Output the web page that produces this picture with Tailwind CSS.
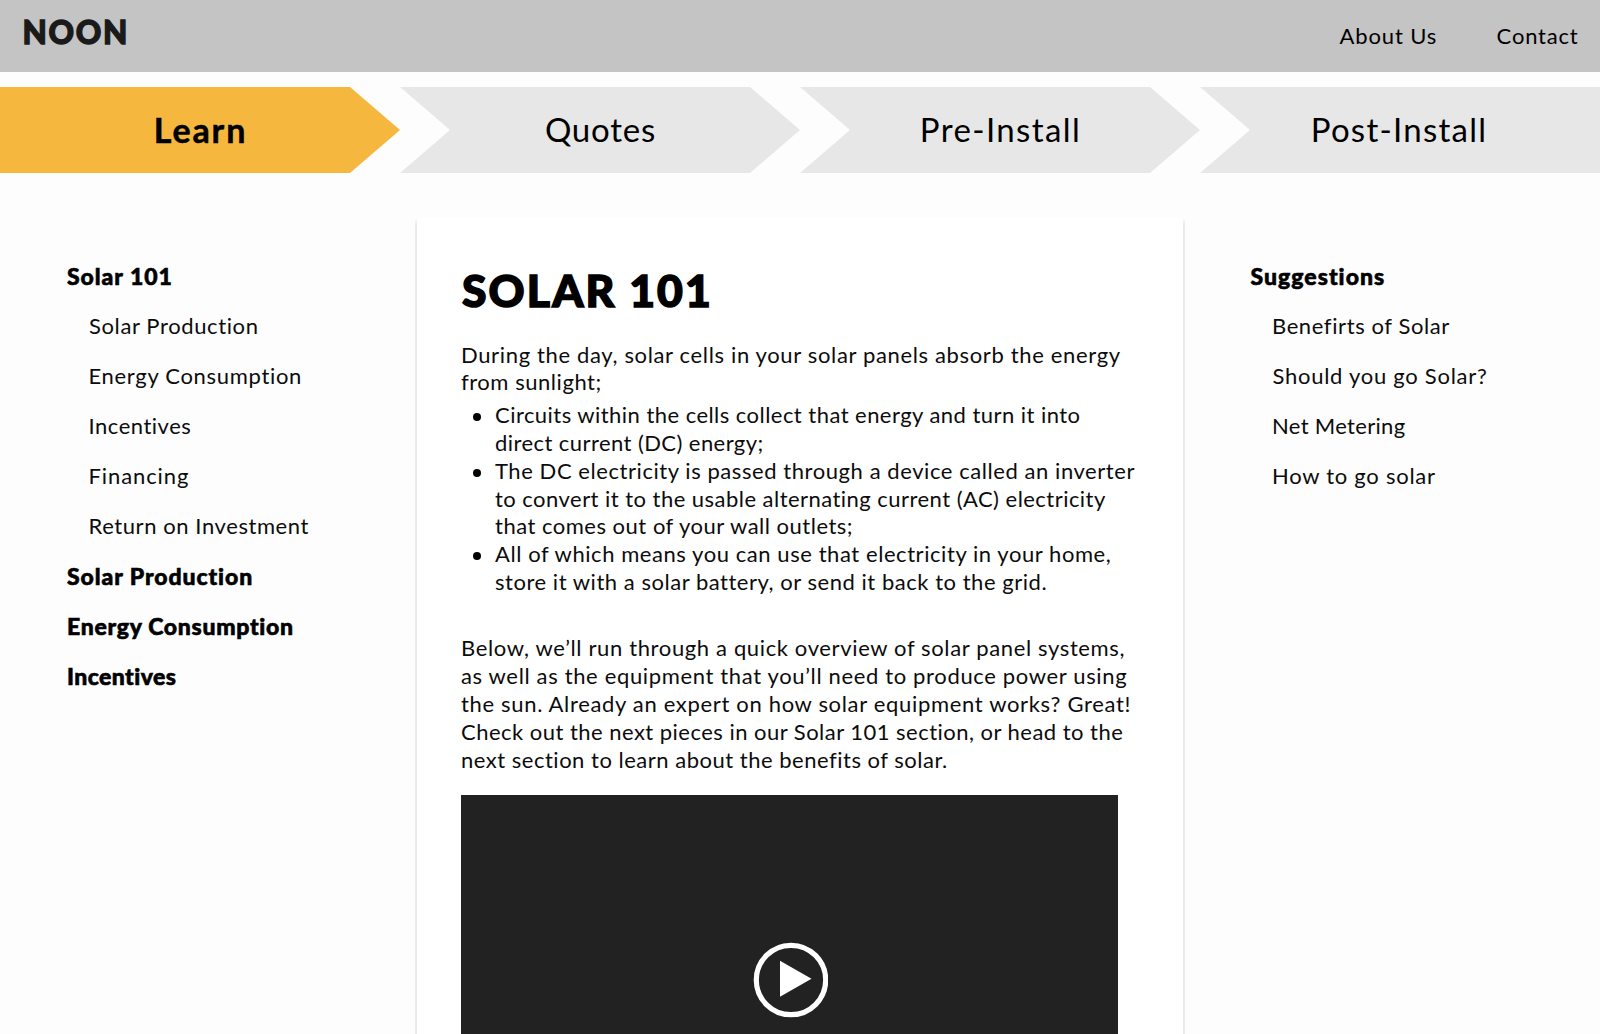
<!DOCTYPE html>
<html lang="en">
<head>
<meta charset="utf-8">
<title>NOON</title>
<script src="https://cdn.jsdelivr.net/npm/@tailwindcss/browser@4"></script>
</head>
<body class="h-screen overflow-hidden bg-[#fdfdfd] font-['Lato',sans-serif] text-[22px] text-black">
<div class="flex h-[1034px] w-[1600px] flex-col overflow-hidden whitespace-nowrap">
  <header class="flex h-[72px] shrink-0 justify-between bg-[#c4c4c4] pr-[21.5px] pl-[22.5px]">
    <div class="h-[64px] text-[31.5px] leading-[64px] font-black tracking-[1.7px] text-[#1a1a1a] [-webkit-text-stroke:1.3px_#1a1a1a]">NOON</div>
    <nav class="flex gap-[59.5px] leading-[72px]">
      <a class="tracking-[0.87px]">About Us</a>
      <a class="tracking-[0.8px]">Contact</a>
    </nav>
  </header>

  <nav class="mt-[15px] grid h-[86px] shrink-0 grid-cols-4 text-center text-[33px] leading-[85px]">
    <a class="bg-[#f5b73d] pl-px text-[34px] font-bold tracking-[1.9px] [-webkit-text-stroke:0.5px_#000] [clip-path:polygon(0_0,350px_0,100%_50%,350px_100%,0_100%)]">Learn</a>
    <a class="bg-[#e7e7e7] pl-px tracking-[0.8px] [clip-path:polygon(0_0,350px_0,100%_50%,350px_100%,0_100%,50px_50%)]">Quotes</a>
    <a class="bg-[#e7e7e7] pl-px tracking-[1.4px] [clip-path:polygon(0_0,350px_0,100%_50%,350px_100%,0_100%,50px_50%)]">Pre-Install</a>
    <a class="bg-[#e7e7e7] pr-[2px] tracking-[1.25px] [clip-path:polygon(0_0,100%_0,100%_100%,0_100%,50px_50%)]">Post-Install</a>
  </nav>

  <div class="mt-11 grid min-h-0 flex-1 grid-cols-[415px_770px_415px]">
    <aside class="pt-[34px] pl-[67px] leading-[50px]">
      <h2 class="text-[23px] font-black tracking-[0.95px] [-webkit-text-stroke:0.6px_#000]">Solar 101</h2>
      <ul class="pl-[21.5px] text-[#0c0c0c]">
        <li class="pl-[0.5px] tracking-[0.62px]">Solar Production</li>
        <li class="tracking-[0.69px]">Energy Consumption</li>
        <li class="tracking-[0.52px]">Incentives</li>
        <li class="tracking-[0.9px]">Financing</li>
        <li class="tracking-[0.58px]">Return on Investment</li>
      </ul>
      <h2 class="text-[23px] font-black tracking-[0.92px] [-webkit-text-stroke:0.6px_#000]">Solar Production</h2>
      <h2 class="text-[23px] font-black tracking-[0.7px] [-webkit-text-stroke:0.6px_#000]">Energy Consumption</h2>
      <h2 class="text-[23px] font-black tracking-[0.43px] [-webkit-text-stroke:0.6px_#000]">Incentives</h2>
    </aside>

    <main class="border-x-2 bg-white pt-[46px] pl-[44px] [border-image:linear-gradient(to_bottom,transparent_2px,#ebebeb_8px)_1]">
      <h1 class="pl-[1px] text-[44.5px] leading-[54px] font-black tracking-[2.1px] [-webkit-text-stroke:1.5px_#000]">SOLAR 101</h1>
      <div class="mt-[23.6px] leading-[27.8px] text-[#0c0c0c]">
        <p>
          <span class="block tracking-[0.65px]">During the day, solar cells in your solar panels absorb the energy</span>
          <span class="block tracking-[0.542px]">from sunlight;</span>
        </p>
        <ul class="mt-[5px] pl-[34px]">
          <li class="relative before:absolute before:top-[12px] before:-left-[22px] before:size-2 before:rounded-full before:bg-black">
            <span class="block tracking-[0.457px]">Circuits within the cells collect that energy and turn it into</span>
            <span class="block tracking-[0.433px]">direct current (DC) energy;</span>
          </li>
          <li class="relative before:absolute before:top-[12px] before:-left-[22px] before:size-2 before:rounded-full before:bg-black">
            <span class="block tracking-[0.565px]">The DC electricity is passed through a device called an inverter</span>
            <span class="block tracking-[0.465px]">to convert it to the usable alternating current (AC) electricity</span>
            <span class="block tracking-[0.5px]">that comes out of your wall outlets;</span>
          </li>
          <li class="relative before:absolute before:top-[12px] before:-left-[22px] before:size-2 before:rounded-full before:bg-black">
            <span class="block tracking-[0.565px]">All of which means you can use that electricity in your home,</span>
            <span class="block tracking-[0.531px]">store it with a solar battery, or send it back to the grid.</span>
          </li>
        </ul>
        <p class="mt-[38.6px]">
          <span class="block tracking-[0.635px]">Below, we’ll run through a quick overview of solar panel systems,</span>
          <span class="block tracking-[0.65px]">as well as the equipment that you’ll need to produce power using</span>
          <span class="block tracking-[0.67px]">the sun. Already an expert on how solar equipment works? Great!</span>
          <span class="block tracking-[0.473px]">Check out the next pieces in our Solar 101 section, or head to the</span>
          <span class="block tracking-[0.51px]">next section to learn about the benefits of solar.</span>
        </p>
      </div>
      <div class="mt-[22px] flex h-[369px] w-[657px] items-center justify-center bg-[#222]">
        <svg class="size-[76px]" viewBox="0 0 76 76">
          <circle cx="39" cy="38" r="34.7" fill="none" stroke="#fff" stroke-width="5.2"/>
          <path d="M28 18.8v36l31.5-18z" fill="#fff"/>
        </svg>
      </div>
    </main>

    <aside class="pt-[34px] pl-[65.5px] leading-[50px]">
      <h2 class="text-[23px] font-black tracking-[1.03px] [-webkit-text-stroke:0.6px_#000]">Suggestions</h2>
      <ul class="pl-[21.5px] text-[#0c0c0c]">
        <li class="tracking-[0.6px]">Benefirts of Solar</li>
        <li class="pl-[0.5px] tracking-[0.73px]">Should you go Solar?</li>
        <li class="tracking-[0.32px]">Net Metering</li>
        <li class="tracking-[0.74px]">How to go solar</li>
      </ul>
    </aside>
  </div>
</div>
</body>
</html>
